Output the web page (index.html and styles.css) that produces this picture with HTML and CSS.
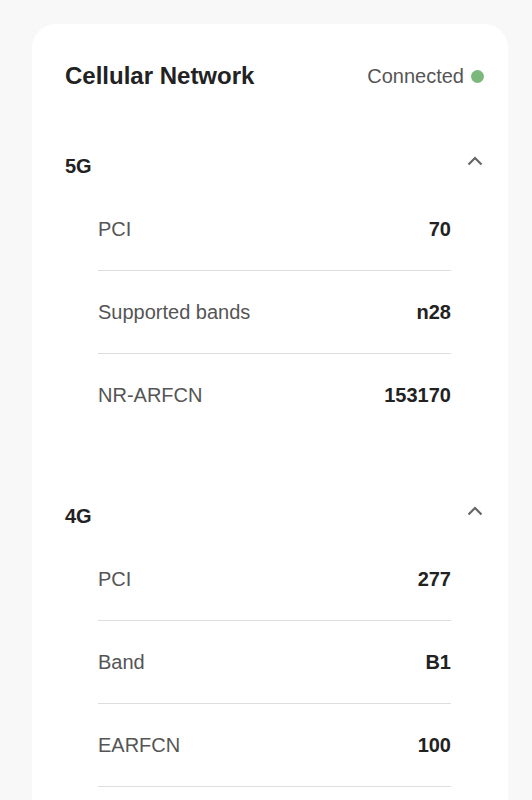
FILE: index.html
```html
<!DOCTYPE html>
<html>
<head>
<meta charset="utf-8">
<link rel="stylesheet" href="styles.css">
</head>
<body>
<div class="card">
  <div class="card-header">
    <h1 class="title">Cellular Network</h1>
    <div class="status">Connected <span class="dot"></span></div>
  </div>
  <section class="group">
    <div class="group-head">
      <span class="group-name">5G</span>
      <svg class="chev" width="16" height="10" viewBox="0 0 16 10"><path d="M1.5 8.5 L8 2 L14.5 8.5" fill="none" stroke="#666" stroke-width="2.2"/></svg>
    </div>
    <div class="rows">
      <div class="row"><span class="label">PCI</span><span class="value">70</span></div>
      <div class="row"><span class="label">Supported bands</span><span class="value">n28</span></div>
      <div class="row last"><span class="label">NR-ARFCN</span><span class="value">153170</span></div>
    </div>
  </section>
  <section class="group">
    <div class="group-head">
      <span class="group-name">4G</span>
      <svg class="chev" width="16" height="10" viewBox="0 0 16 10"><path d="M1.5 8.5 L8 2 L14.5 8.5" fill="none" stroke="#666" stroke-width="2.2"/></svg>
    </div>
    <div class="rows">
      <div class="row"><span class="label">PCI</span><span class="value">277</span></div>
      <div class="row"><span class="label">Band</span><span class="value">B1</span></div>
      <div class="row"><span class="label">EARFCN</span><span class="value">100</span></div>
    </div>
  </section>
</div>
</body>
</html>
```
FILE: styles.css
```css
html, body {
  margin: 0;
  padding: 0;
  background: #f8f8f8;
  font-family: "Liberation Sans", Arial, sans-serif;
  overflow: hidden;
}
.card {
  margin: 24px 24px 0 32px;
  background: #fff;
  border-radius: 24px;
  padding: 36px 24px 40px 33px;
  min-height: 900px;
}
.card-header {
  display: flex;
  justify-content: space-between;
  align-items: center;
  height: 32px;
}
.title {
  margin: 0;
  font-size: 24px;
  font-weight: 700;
  color: #222;
  line-height: 32px;
}
.status {
  display: flex;
  align-items: center;
  gap: 7px;
  font-size: 20px;
  color: #555;
}
.dot {
  width: 13px;
  height: 13px;
  border-radius: 50%;
  background: #7cb87c;
}
.group {
  margin-top: 52px;
}
.group + .group {
  margin-top: 57px;
}
.group-head {
  display: flex;
  justify-content: space-between;
  align-items: center;
  height: 44px;
}
.group-name {
  font-size: 20px;
  font-weight: 700;
  color: #222;
}
.chev {
  margin-right: 1px;
  margin-top: -10px;
}
.rows {
  margin: 0 33px;
}
.row {
  display: flex;
  justify-content: space-between;
  align-items: center;
  padding: 30px 0 29px;
  line-height: 23px;
  border-bottom: 1px solid #dedede;
  font-size: 20px;
}
.row.last {
  border-bottom-color: transparent;
}
.label {
  color: #555;
}
.value {
  color: #222;
  font-weight: 700;
}
```
